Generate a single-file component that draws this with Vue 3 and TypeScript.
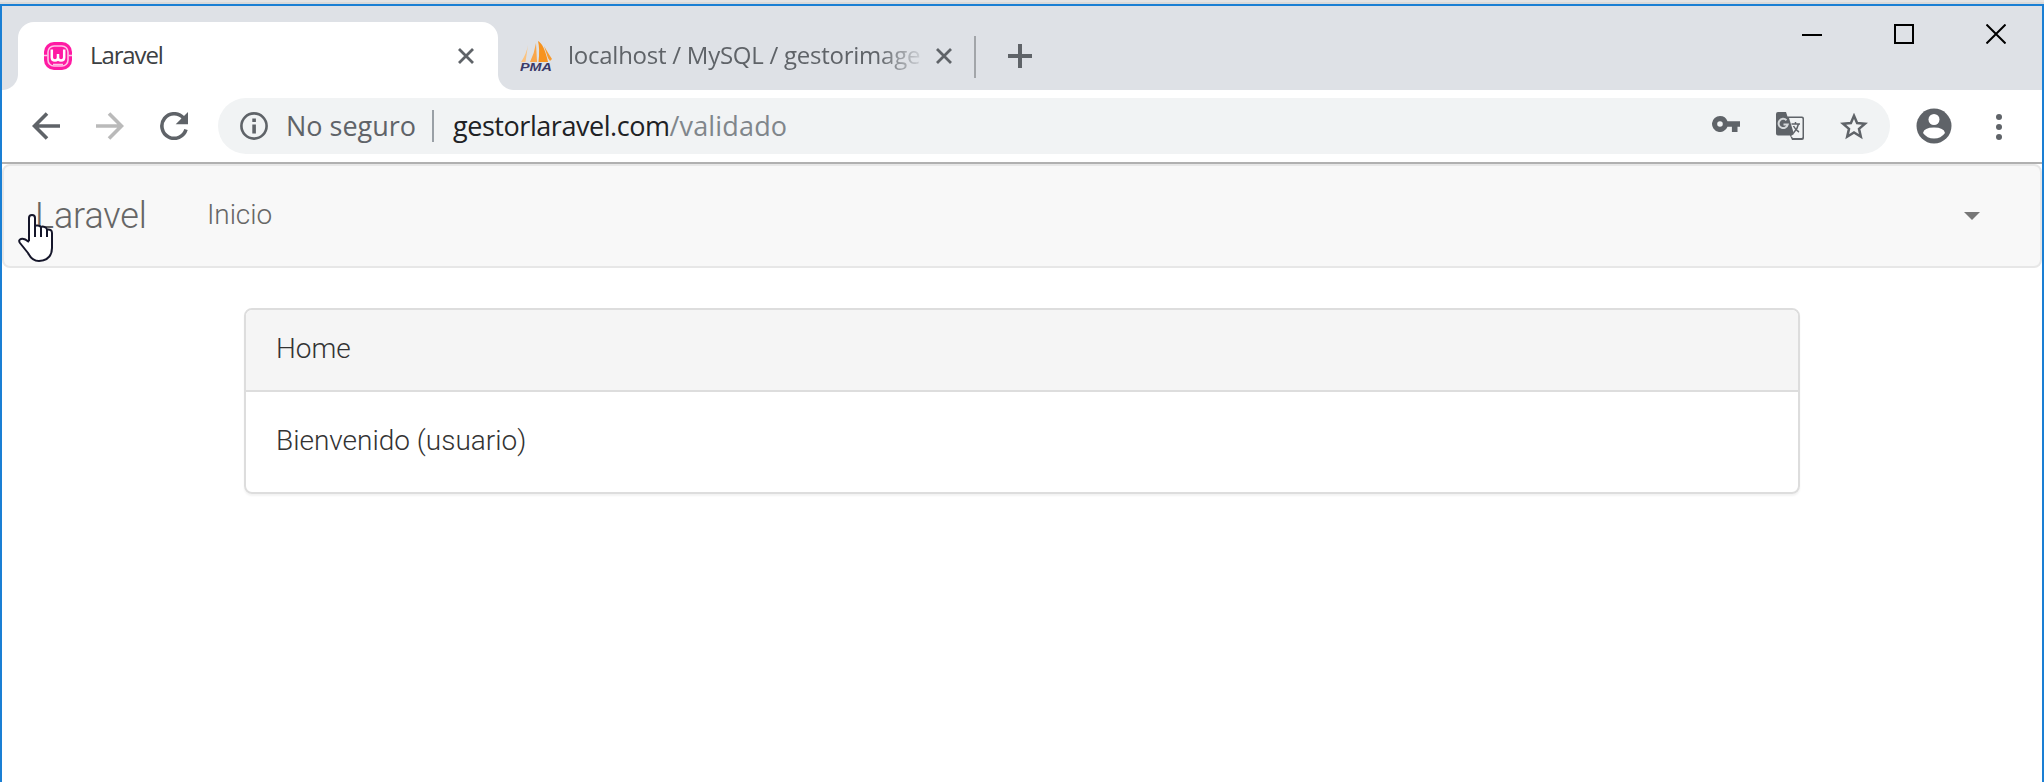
<script setup lang="ts">
interface Panel {
  heading: string
  body: string
}

const panel: Panel = {
  heading: 'Home',
  body: 'Bienvenido (usuario)',
}
</script>

<template>
  <div class="screen">
    <div class="backdrop-edge"></div>
    <div class="window">
      <header class="tabstrip">
        <div class="tab active">
          <svg class="favicon" viewBox="0 0 28 28">
            <rect width="28" height="28" rx="10" fill="#ff1aa3" />
            <rect x="4" y="4" width="20" height="20" rx="6" fill="none" stroke="#ffc4e6" stroke-width="1.6" />
            <path d="M0 13.500h3.500M24.500 13.500H28M9 22.500h10" stroke="#ffc4e6" stroke-width="1.6" />
            <path d="M7.800 7.500v8q0 3 3.200 3q3 0 3-3v-3.500v3.500q0 3 3 3q3.200 0 3.200-3v-8" fill="none" stroke="#fff" stroke-width="2.500" />
          </svg>
          <span class="tab-title first-title">Laravel</span>
          <svg class="tab-close" viewBox="0 0 16 16"><path d="M1 1l14 14M15 1L1 15" /></svg>
        </div>
        <div class="tab idle">
          <svg class="pma" viewBox="0 0 33 32">
            <path d="M8 5L5.500 22H1Q6.500 14 8 5Z" fill="#fbc27e" />
            <path d="M16 3L17 22H10Q14.500 13 16 3Z" fill="#f9a64a" />
            <path d="M18 1Q24 4 28 22H18.500Q20 9 18 1Z" fill="#f7931e" />
            <path d="M24 6Q28 13 32 19L30 21L28 18Z" fill="#f79a2e" />
            <text x="0" y="31" textLength="32" lengthAdjust="spacingAndGlyphs">PMA</text>
          </svg>
          <span class="tab-title second-title">localhost / MySQL / gestorimage</span>
          <svg class="tab-close" viewBox="0 0 16 16"><path d="M1 1l14 14M15 1L1 15" /></svg>
        </div>
        <i class="tab-separator"></i>
        <svg class="new-tab" viewBox="0 0 24 24"><path d="M12 0v24M0 12h24" /></svg>
        <div class="window-controls">
          <svg viewBox="0 0 20 20"><path d="M0 11h20" /></svg>
          <svg viewBox="0 0 20 20"><path d="M1 1h18v18H1z" /></svg>
          <svg viewBox="0 0 20 20"><path d="M0.500 0.500l19 19M19.500 0.500l-19 19" /></svg>
        </div>
      </header>

      <div class="toolbar">
        <svg class="nav-icon" viewBox="0 0 28 28"><path d="M28 14H3M15 1.500L2.500 14L15 26.500" /></svg>
        <svg class="nav-icon disabled" viewBox="0 0 28 28"><path d="M0 14h25M13 1.500L25.500 14L13 26.500" /></svg>
        <svg class="nav-icon" viewBox="0 0 28 28">
          <path d="M23.500 6A12.300 12.300 0 1 0 26 17.500" />
          <path d="M28 0v12.300H15.700z" class="solid" />
        </svg>
        <div class="omnibox">
          <svg class="info" viewBox="0 0 28 28">
            <circle cx="14" cy="14" r="12.600" />
            <path d="M12.300 12.500h3.600v9h-3.600zM12.300 6.500h3.600v3.500h-3.600z" />
          </svg>
          <span class="security">No seguro</span>
          <i class="divider"></i>
          <span class="domain">gestorlaravel.com</span><span class="path">/validado</span>
          <svg class="key" viewBox="0 0 28 16">
            <path fill-rule="evenodd" d="M8 0a8 8 0 0 1 7.500 5.200H28v5.600h-2.500V16h-5.600v-5.200h-4.400A8 8 0 1 1 8 0zM8 5.200a2.800 2.800 0 1 0 0 5.600a2.800 2.800 0 0 0 0-5.600z" />
          </svg>
          <svg class="translate" viewBox="0 0 28 28">
            <path d="M2 0H10l1.500 4.500H26q2 0 2 2V26q0 2-2 2H16l-2-4.500H2q-2 0-2-2V2q0-2 2-2z" fill="#5f6368" />
            <path d="M13 6H25.500q1 0 1 1V25q0 1-1 1H17l-2-2l3-2z" fill="#f1f3f4" />
            <path d="M10.500 8.200A4.600 4.600 0 1 0 11.700 12.500H7.500" fill="none" stroke="#d5d8da" stroke-width="2" />
            <path d="M15.500 12h8.500M19.500 10v2M22.500 12q-1 5-5 9M17.500 14q2 4 5.500 6" fill="none" stroke="#5f6368" stroke-width="1.500" />
          </svg>
          <svg class="star" viewBox="0 0 28 27">
            <path d="M14 2.800L17.100 10L25 10.700L19 15.900L20.800 23.700L14 19.500L7.200 23.700L9 15.900L3 10.700L10.900 10Z" />
          </svg>
        </div>
        <svg class="avatar" viewBox="0 0 36 36">
          <circle cx="18" cy="18" r="17.500" fill="#5f6368" />
          <circle cx="18" cy="11.500" r="5.500" fill="#fff" />
          <path d="M7 25Q8 19.500 18 19.500T29 25Q25 30.500 18 30.500T7 25Z" fill="#fff" />
        </svg>
        <svg class="menu" viewBox="0 0 6 26">
          <circle cx="3" cy="3" r="3" /><circle cx="3" cy="13" r="3" /><circle cx="3" cy="23" r="3" />
        </svg>
      </div>

      <main class="page">
        <nav class="navbar">
          <a class="brand">Laravel</a>
          <a class="link">Inicio</a>
          <i class="caret"></i>
        </nav>
        <section class="panel">
          <div class="panel-heading"><span class="home">{{ panel.heading }}</span></div>
          <div class="panel-body"><span class="welcome">{{ panel.body }}</span></div>
        </section>
      </main>
    </div>
    <svg class="pointer" viewBox="0 0 36 48">
      <path d="M11 27V4q0-3 3-3t3 3v9q0-2 3-1.500q2.500.2 3 2q1-1.500 3.500-.5q2 .5 2.500 2.500q5-.5 5 3.500v15q0 12-13 13Q14 47 10 39L2 29q-2-3 1-4t8 3" class="hand" />
      <path d="M17 13v10M23 14v9M29 16v7" class="fingers" />
    </svg>
  </div>
</template>

<style>
html,
body {
  margin: 0;
  overflow: hidden;
}
</style>

<style scoped>
.screen {
  position: relative;
  box-sizing: border-box;
  width: 2044px;
  height: 782px;
  overflow: hidden;
  background: #fff;
  font-family: 'Open Sans', 'Noto Sans', sans-serif;
}
svg {
  display: block;
  flex: none;
}
span,
a {
  white-space: pre;
}
.backdrop-edge {
  height: 4px;
  box-sizing: border-box;
  background: #e4e4e4;
  border-bottom: 2px solid #d9d9d9;
}
.window {
  box-sizing: border-box;
  height: 778px;
  border: 2px solid #1a7fd4;
  border-bottom: 0;
}
.tabstrip {
  display: flex;
  height: 84px;
  background: #dee1e6;
}
.tab {
  display: flex;
  align-items: center;
  box-sizing: border-box;
  height: 68px;
  margin-top: 16px;
}
.active {
  position: relative;
  width: 480px;
  margin-left: 16px;
  padding: 0 24px 0 26px;
  border-radius: 16px 16px 0 0;
  background: #fff;
}
.active::before,
.active::after {
  content: '';
  position: absolute;
  bottom: 0;
  width: 16px;
  height: 16px;
}
.active::before {
  left: -16px;
  background: radial-gradient(circle at 0 0, transparent 15.5px, #fff 16.5px);
}
.active::after {
  right: -16px;
  background: radial-gradient(circle at 100% 0, transparent 15.5px, #fff 16.5px);
}
.favicon {
  width: 28px;
  height: 28px;
}
.tab-title {
  padding-bottom: 2px;
  font-size: 24px;
  line-height: 32px;
}
.first-title {
  margin-left: 18px;
  margin-right: auto;
  color: #3c4043;
  letter-spacing: -1.1px;
}
.tab-close {
  width: 16px;
  height: 16px;
  fill: none;
  stroke: #5f6368;
  stroke-width: 2.8;
}
.idle {
  width: 476px;
  padding-left: 22px;
}
.pma {
  width: 33px;
  height: 32px;
}
.pma text {
  font: italic 700 11px 'Liberation Sans', sans-serif;
  fill: #3a3a68;
}
.second-title {
  width: 352px;
  margin-left: 15px;
  margin-right: 16px;
  color: #5f6368;
  letter-spacing: -0.25px;
  mask-image: linear-gradient(to right, #000 310px, rgba(0, 0, 0, 0.15) 352px);
}
.tab-separator {
  width: 2px;
  height: 42px;
  margin-top: 30px;
  background: #a2a5a9;
}
.new-tab {
  width: 24px;
  height: 24px;
  margin: 38px 0 0 32px;
  stroke: #5f6368;
  stroke-width: 4;
}
.window-controls {
  display: flex;
  gap: 72px;
  margin: 18px 36px 0 auto;
}
.window-controls svg {
  width: 20px;
  height: 20px;
  fill: none;
  stroke: #000;
  stroke-width: 2;
}
.toolbar {
  display: flex;
  align-items: center;
  box-sizing: border-box;
  height: 74px;
  padding: 0 40px 0 30px;
  border-bottom: 2px solid #b0b0b0;
}
.nav-icon {
  width: 28px;
  height: 28px;
  margin-right: 36px;
  fill: none;
  stroke: #5f6368;
  stroke-width: 3.6;
}
.nav-icon.disabled {
  stroke: #bababa;
}
.nav-icon .solid {
  fill: #5f6368;
  stroke: none;
}
.nav-icon:nth-child(3) {
  margin-right: 30px;
}
.omnibox {
  display: flex;
  align-items: center;
  box-sizing: border-box;
  width: 1672px;
  height: 56px;
  padding: 0 22px;
  border-radius: 28px;
  background: #f1f3f4;
  font-size: 27px;
  line-height: 36px;
}
.info {
  width: 28px;
  height: 28px;
  fill: #5f6368;
}
.info circle {
  fill: none;
  stroke: #5f6368;
  stroke-width: 2.6;
}
.security {
  width: 128px;
  margin-left: 18px;
  color: #5f6368;
}
.divider {
  width: 2px;
  height: 32px;
  margin: 0 19px 0 18px;
  background: #9aa0a6;
}
.domain {
  color: #202124;
  letter-spacing: -0.45px;
}
.path {
  color: #80868b;
  letter-spacing: 0.15px;
}
.key {
  width: 28px;
  height: 16px;
  margin: -4px 36px 0 auto;
  fill: #5f6368;
}
.translate {
  width: 28px;
  height: 28px;
  margin-right: 36px;
}
.star {
  width: 28px;
  height: 27px;
  fill: none;
  stroke: #5f6368;
  stroke-width: 2.5;
}
.avatar {
  width: 36px;
  height: 36px;
  margin-left: 26px;
}
.menu {
  width: 6px;
  height: 26px;
  margin: 2px 0 0 44px;
  fill: #5f6368;
}
.page {
  font-family: Roboto, sans-serif;
  font-weight: 300;
}
.navbar {
  display: flex;
  align-items: center;
  box-sizing: border-box;
  height: 104px;
  padding: 0 60px 0 31px;
  border: 2px solid #e7e7e7;
  border-radius: 8px;
  background: #f8f8f8;
  color: #666;
}
.brand {
  width: 172px;
  font-size: 36px;
  line-height: 40px;
  letter-spacing: -0.1px;
}
.link {
  padding-bottom: 2px;
  font-size: 28px;
  line-height: 40px;
  letter-spacing: -0.1px;
}
.caret {
  margin-left: auto;
  border-top: 8px solid #777;
  border-right: 8px solid transparent;
  border-left: 8px solid transparent;
}
.panel {
  box-sizing: border-box;
  width: 1556px;
  height: 186px;
  margin: 40px auto 0;
  overflow: hidden;
  border: 2px solid #ddd;
  border-radius: 8px;
  box-shadow: 0 2px 2px rgba(0, 0, 0, 0.05);
  color: #333;
  font-size: 28px;
  line-height: 40px;
}
.panel-heading {
  box-sizing: border-box;
  height: 82px;
  padding: 19px 30px 0;
  border-bottom: 2px solid #ddd;
  background: #f5f5f5;
}
.panel-body {
  padding: 29px 30px 0;
}
.pointer {
  position: absolute;
  left: 18px;
  top: 214px;
  width: 36px;
  height: 48px;
}
.hand {
  fill: #fff;
  stroke: #15162a;
  stroke-width: 2;
  stroke-linejoin: round;
}
.fingers {
  fill: none;
  stroke: #15162a;
  stroke-width: 2;
}
</style>
